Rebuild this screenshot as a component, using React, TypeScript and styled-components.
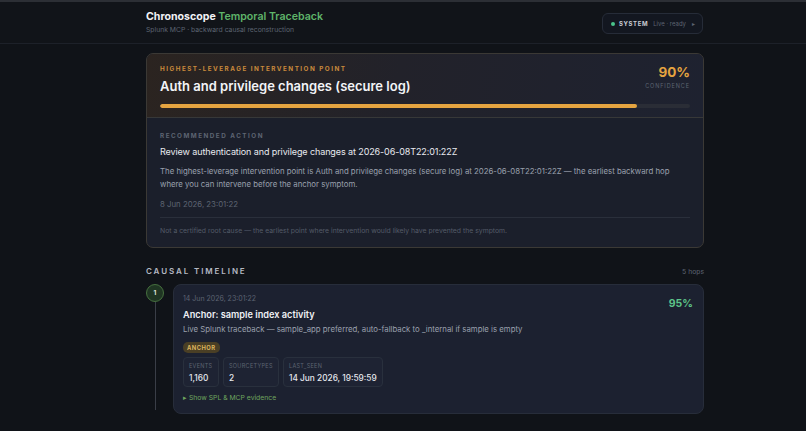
import styled, { createGlobalStyle } from 'styled-components';

const GlobalStyle = createGlobalStyle`
  html, body {
    margin: 0;
    padding: 0;
    background: #101318;
    font-family: Inter, "Noto Sans", "Liberation Sans", sans-serif;
    color: #e6e8ee;
  }
`;

const Page = styled.div`
  width: 806px;
  height: 431px;
  overflow: hidden;
  background: #101318;
  border-top: 2px solid #2c2f35;
  box-sizing: border-box;
`;

const TopBar = styled.header`
  height: 41px;
  border-bottom: 1px solid #1d2129;
  background: #111419;
`;

const Column = styled.div`
  width: 558px;
  margin-left: 146px;
`;

const TopInner = styled(Column)`
  height: 100%;
  display: flex;
  justify-content: space-between;
  align-items: center;
`;

const Brand = styled.div`
  display: flex;
  flex-direction: column;
  gap: 2px;
  margin-top: -1px;
`;

const BrandTitle = styled.div`
  font-size: 10.6px;
  font-weight: 700;
  color: #f1f2f5;

  span {
    color: #5fb56a;
    font-weight: 600;
  }
`;

const BrandSub = styled.div`
  font-size: 6.8px;
  color: #5d6472;
`;

const SystemPill = styled.div`
  display: flex;
  align-items: center;
  white-space: nowrap;
  height: 21px;
  box-sizing: border-box;
  padding: 0 7px 0 8px;
  border: 1px solid #262c38;
  border-radius: 6px;
  background: #131720;
  font-size: 6px;
  margin-top: 2px;
  margin-right: 1px;
`;

const Dot = styled.span`
  width: 4px;
  height: 4px;
  border-radius: 50%;
  background: #4ac48a;
  margin-right: 4px;
`;

const PillLabel = styled.span`
  font-weight: 700;
  letter-spacing: 0.6px;
  color: #c9ccd4;
  margin-right: 5px;
`;

const PillState = styled.span<{ $gap?: number }>`
  color: #5d6472;
  margin-left: ${(p) => p.$gap ?? 0}px;
`;

const Main = styled(Column)`
  padding-top: 9px;
`;

const HeroCard = styled.section`
  border: 1px solid #3b3935;
  border-radius: 7px;
  overflow: hidden;
  background: #1b1f2b;
`;

const HeroTop = styled.div`
  background: linear-gradient(100deg, #2b2420 0%, #22222a 45%, #1e2230 100%);
  border-bottom: 1px solid #373838;
  padding: 11px 13px 9px 13px;
`;

const HeroRow = styled.div`
  display: flex;
  justify-content: space-between;
  align-items: flex-start;
`;

const Eyebrow = styled.div<{ $color?: string }>`
  font-size: 6.3px;
  font-weight: 700;
  letter-spacing: 1.5px;
  text-transform: uppercase;
  color: ${(p) => p.$color ?? '#5d6472'};
`;

const HeroTitle = styled.h1`
  margin: 5px 0 0 0;
  font-size: 13px;
  font-weight: 600;
  color: #f3f4f7;
`;

const Confidence = styled.div`
  text-align: right;
  margin-top: -1px;
`;

const ConfValue = styled.div`
  font-size: 13.5px;
  font-weight: 700;
  color: #e5a440;
`;

const ConfLabel = styled.div`
  margin-top: 3px;
  font-size: 5.5px;
  letter-spacing: 0.9px;
  color: #5d6472;
`;

const Track = styled.div`
  margin-top: 10px;
  height: 4px;
  border-radius: 2px;
  background: #2a2d36;
  overflow: hidden;
`;

const Fill = styled.div`
  height: 100%;
  border-radius: 2px;
  background: #e5a440;
`;

const HeroBody = styled.div`
  padding: 14px 13px 12px 13px;
`;

const ActionTitle = styled.div`
  margin-top: 6px;
  font-size: 9px;
  letter-spacing: -0.1px;
  color: #e8eaef;
`;

const Para = styled.p`
  margin: 8px 0 0 0;
  max-width: 514px;
  font-size: 7.8px;
  line-height: 13px;
  color: #9aa0ad;
`;

const Stamp = styled.div`
  margin-top: 8px;
  font-size: 7.8px;
  color: #5d6472;
`;

const Disclaimer = styled.div`
  margin-top: 8px;
  padding-top: 8px;
  border-top: 1px solid #2a2f3b;
  font-size: 6.85px;
  color: #545b68;
`;

const SectionHead = styled.div`
  margin-top: 18px;
  display: flex;
  justify-content: space-between;
  align-items: center;
`;

const SectionTitle = styled.h2`
  margin: 0;
  font-size: 8px;
  font-weight: 600;
  letter-spacing: 1.9px;
  color: #b5b9c3;
`;

const Hops = styled.span`
  font-size: 6.8px;
  color: #5d6472;
`;

const Timeline = styled.div`
  margin-top: 8px;
  display: flex;
  gap: 9px;
`;

const Rail = styled.div`
  width: 18px;
  display: flex;
  flex-direction: column;
  align-items: center;
`;

const Node = styled.div`
  width: 18px;
  height: 18px;
  box-sizing: border-box;
  border-radius: 50%;
  background: #1f3523;
  border: 1px solid #46703f;
  display: flex;
  align-items: center;
  justify-content: center;
  font-size: 6.5px;
  font-weight: 700;
  color: #dfe6dc;
  flex-shrink: 0;
`;

const RailLine = styled.div`
  width: 1px;
  height: 108px;
  background: #3a3e47;
`;

const HopCard = styled.article`
  flex: 1;
  background: #1c2130;
  border: 1px solid #272d3a;
  border-radius: 8px;
  padding: 9px 10px 11px 9px;
`;

const HopHead = styled.div`
  display: flex;
  justify-content: space-between;
  align-items: flex-start;
`;

const HopDate = styled.div`
  font-size: 7px;
  color: #5d6472;
`;

const HopScore = styled.div`
  font-size: 10.5px;
  font-weight: 700;
  color: #5cc489;
  margin-top: 3px;
`;

const HopTitle = styled.div`
  margin-top: -1px;
  font-size: 9.2px;
  font-weight: 600;
  color: #eef0f4;
`;

const HopDesc = styled.div`
  margin-top: 4px;
  font-size: 7.8px;
  color: #9aa0ad;
`;

const Badge = styled.span`
  display: inline-block;
  margin-top: 3px;
  padding: 2px 4px;
  border-radius: 5px;
  background: #4a3f25;
  color: #dcb35e;
  font-size: 5.8px;
  font-weight: 700;
  letter-spacing: 0.5px;
`;

const Stats = styled.div`
  margin-top: 3px;
  display: flex;
  gap: 4px;
`;

const Stat = styled.div`
  box-sizing: border-box;
  height: 30px;
  border: 1px solid #29303d;
  border-radius: 4px;
  background: #1e2333;
  padding: 5px 5px 0 5px;
  display: flex;
  flex-direction: column;
  gap: 4px;
`;

const StatLabel = styled.div`
  font-size: 5.5px;
  letter-spacing: 0.3px;
  color: #5d6472;
`;

const StatValue = styled.div`
  font-size: 8.3px;
  font-weight: 500;
  color: #e6e8ee;
`;

const Evidence = styled.div`
  margin-top: 6px;
  font-size: 6.8px;
  color: #6ea55e;
`;

const stats = [
  { label: 'EVENTS', value: '1,160', width: 36 },
  { label: 'SOURCETYPES', value: '2', width: 56 },
  { label: 'LAST_SEEN', value: '14 Jun 2026, 19:59:59', width: 100 },
];

export default function App() {
  const confidence = 90;

  return (
    <>
      <GlobalStyle />
      <Page>
        <TopBar>
          <TopInner>
            <Brand>
              <BrandTitle>
                Chronoscope <span>Temporal Traceback</span>
              </BrandTitle>
              <BrandSub>Splunk MCP · backward causal reconstruction</BrandSub>
            </Brand>
            <SystemPill>
              <Dot />
              <PillLabel>SYSTEM</PillLabel>
              <PillState>Live · ready</PillState>
              <PillState $gap={6}>▸</PillState>
            </SystemPill>
          </TopInner>
        </TopBar>

        <Main>
          <HeroCard>
            <HeroTop>
              <HeroRow>
                <div>
                  <Eyebrow $color="#c98a3c">Highest-leverage intervention point</Eyebrow>
                  <HeroTitle>Auth and privilege changes (secure log)</HeroTitle>
                </div>
                <Confidence>
                  <ConfValue>{confidence}%</ConfValue>
                  <ConfLabel>CONFIDENCE</ConfLabel>
                </Confidence>
              </HeroRow>
              <Track>
                <Fill style={{ width: `${confidence}%` }} />
              </Track>
            </HeroTop>
            <HeroBody>
              <Eyebrow>Recommended action</Eyebrow>
              <ActionTitle>Review authentication and privilege changes at 2026-06-08T22:01:22Z</ActionTitle>
              <Para>
                The highest-leverage intervention point is Auth and privilege changes (secure log) at
                2026-06-08T22:01:22Z — the earliest backward hop where you can intervene before the
                anchor symptom.
              </Para>
              <Stamp>8 Jun 2026, 23:01:22</Stamp>
              <Disclaimer>
                Not a certified root cause — the earliest point where intervention would likely have
                prevented the symptom.
              </Disclaimer>
            </HeroBody>
          </HeroCard>

          <SectionHead>
            <SectionTitle>CAUSAL TIMELINE</SectionTitle>
            <Hops>5 hops</Hops>
          </SectionHead>

          <Timeline>
            <Rail>
              <Node>1</Node>
              <RailLine />
            </Rail>
            <HopCard>
              <HopHead>
                <HopDate>14 Jun 2026, 23:01:22</HopDate>
                <HopScore>95%</HopScore>
              </HopHead>
              <HopTitle>Anchor: sample index activity</HopTitle>
              <HopDesc>
                Live Splunk traceback — sample_app preferred, auto-fallback to _internal if sample is empty
              </HopDesc>
              <Badge>ANCHOR</Badge>
              <Stats>
                {stats.map((s) => (
                  <Stat key={s.label} style={{ width: s.width }}>
                    <StatLabel>{s.label}</StatLabel>
                    <StatValue>{s.value}</StatValue>
                  </Stat>
                ))}
              </Stats>
              <Evidence>▸ Show SPL &amp; MCP evidence</Evidence>
            </HopCard>
          </Timeline>
        </Main>
      </Page>
    </>
  );
}
